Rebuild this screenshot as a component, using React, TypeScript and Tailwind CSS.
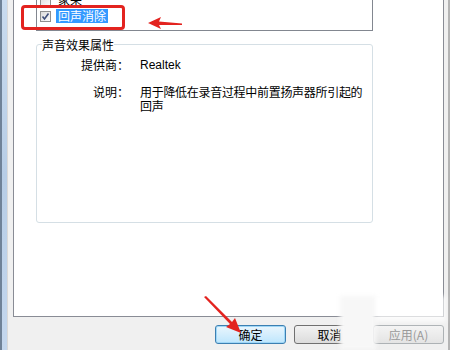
import React from "react";

const cjk = { fontFamily: '"Noto Sans CJK SC", "Noto Sans", sans-serif' };

function CheckBox({ checked }: { checked?: boolean }) {
  return (
    <span className="flex h-[11px] w-[11px] shrink-0 items-center justify-center border border-[#8e8f8f] bg-gradient-to-br from-[#dcdcdc] to-[#fafafa]">
      {checked && (
        <svg width="9" height="9" viewBox="0 0 9 9">
          <path d="M1.5 4.5 L3.5 7 L7.5 1.5" fill="none" stroke="#3f4f7a" strokeWidth="1.6" />
        </svg>
      )}
    </span>
  );
}

function WinButton({
  label,
  primary,
  disabled,
}: {
  label: string;
  primary?: boolean;
  disabled?: boolean;
}) {
  return (
    <div
      className={
        "flex h-[19px] w-[71px] items-center justify-center rounded-[3px] border text-[12px] " +
        (primary
          ? "border-[#3c7fb1] bg-gradient-to-b from-[#eaf6fd] to-[#bee6fd] shadow-[inset_0_0_0_1px_#9fd7f7] "
          : disabled
          ? "border-[#adb2b5] bg-gradient-to-b from-[#f4f4f4] to-[#e4e4e4] "
          : "border-[#707070] bg-gradient-to-b from-[#f2f2f2] to-[#dcdcdc] ") +
        (disabled ? "text-[#9a9a9a]" : "text-black")
      }
      style={cjk}
    >
      {label}
    </div>
  );
}

export default function App() {
  return (
    <div className="relative flex h-[350px] w-[450px] overflow-hidden bg-[#f0f0f0]" style={cjk}>
      {/* window frame on the left */}
      <div className="flex h-full w-[7px]">
        <div className="w-[2px] bg-[#6f8298]" />
        <div className="w-[5px] bg-gradient-to-b from-[#c9dbef] via-[#b7cde6] to-[#c4d7ee]" />
      </div>
      <div className="w-[6px] border-l border-[#d9d9d9]" />

      {/* tab page + buttons */}
      <div className="flex w-[432px] flex-col">
        <div className="h-[317px] border-x border-b border-[#898c95] bg-white pl-[22px]">
          {/* effect list */}
          <div className="h-[31px] w-[337px] overflow-hidden border-x border-b border-[#828790] bg-white">
            <div className="-mt-[8px] flex flex-col text-[12px] leading-[16px]">
              <div className="flex h-[16px] items-center pl-[3px]">
                <CheckBox />
                <span className="ml-[6px] px-[1px]">家来</span>
              </div>
              <div className="flex h-[16px] items-center pl-[3px]">
                <CheckBox checked />
                <span className="ml-[5px] bg-[#3399ff] px-[2px] leading-[14px] text-white">回声消除</span>
              </div>
            </div>
          </div>

          {/* properties group */}
          <fieldset className="mt-[6px] h-[186px] w-[337px] rounded-[3px] border border-[#d5dfe5] px-[5px]">
            <legend className="text-[12px] leading-[15px] text-black">声音效果属性</legend>
            <div className="mt-[6px] flex flex-col gap-[13px] text-[12px] leading-[14px] text-black">
              <div className="flex">
                <span className="w-[87px] text-right">提供商：</span>
                <span className="ml-[11px]" style={{ fontFamily: '"Liberation Sans", sans-serif' }}>
                  Realtek
                </span>
              </div>
              <div className="flex">
                <span className="w-[87px] text-right">说明：</span>
                <span className="ml-[11px] tracking-[-0.3px]">
                  用于降低在录音过程中前置扬声器所引起的
                  <br />
                  回声
                </span>
              </div>
            </div>
          </fieldset>
        </div>

        <div className="flex justify-end gap-[8px] pt-[8px]">
          <WinButton label="确定" primary />
          <WinButton label="取消" />
          <WinButton label="应用(A)" disabled />
        </div>
      </div>

      {/* right frame */}
      <div className="w-[6px] border-r-2 border-[#b4b4b4]" />

      {/* blurred watermark patch */}
      <div className="absolute left-[340px] top-[296px] h-[54px] w-[36px] bg-[#f7f7f7] blur-[2px]" />
      <div className="absolute left-[376px] top-[296px] h-[26px] w-[70px] bg-white/70 blur-[2px]" />

      {/* red annotations */}
      <div className="absolute left-[21px] top-[5px] h-[25px] w-[104px] rounded-[4px] border-[3px] border-[#e3231f]" />
      <svg className="absolute left-[145px] top-[15px]" width="40" height="16" viewBox="0 0 40 16">
        <polygon points="3,8 16,2 14,6.5 37,8.5 37,10 14,10 16,14" fill="#e3231f" />
      </svg>
      <svg className="absolute left-[202px] top-[294px]" width="42" height="42" viewBox="0 0 42 42">
        <polygon points="2,3 4,2 30,28 33,24 39,39 24,33 28,30" fill="#e3231f" />
      </svg>
    </div>
  );
}
